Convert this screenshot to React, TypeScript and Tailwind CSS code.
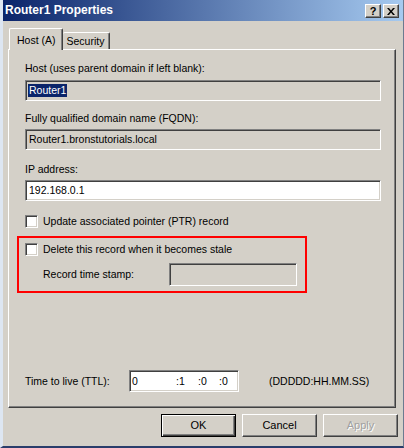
import React from "react";

const font = { fontFamily: '"Liberation Sans", Arial, sans-serif' };

function Sunken({ className = "", bg = "bg-white", children }: { className?: string; bg?: string; children?: React.ReactNode }) {
  return (
    <div
      className={`${bg} border border-t-[#808080] border-l-[#808080] border-b-white border-r-white shadow-[inset_1px_1px_0_#404040,inset_-1px_-1px_0_#d4d0c8] ${className}`}
    >
      {children}
    </div>
  );
}

function Check() {
  return (
    <div className="w-[13px] h-[13px] bg-white border border-t-[#808080] border-l-[#808080] border-b-white border-r-white shadow-[inset_1px_1px_0_#404040,inset_-1px_-1px_0_#d4d0c8] shrink-0" />
  );
}

function Btn({ children, def = false, disabled = false }: { children: React.ReactNode; def?: boolean; disabled?: boolean }) {
  return (
    <div
      className={`w-[75px] h-[23px] flex items-center justify-center text-[11px] ${
        def
          ? "border border-black shadow-[inset_1px_1px_0_#ffffff,inset_-1px_-1px_0_#404040,inset_-2px_-2px_0_#808080]"
          : "border border-t-white border-l-white border-b-[#404040] border-r-[#404040] shadow-[inset_-1px_-1px_0_#808080]"
      }`}
    >
      <span className={disabled ? "text-[#a0a0a0] [text-shadow:1px_1px_0_#ffffff]" : "text-black"}>{children}</span>
    </div>
  );
}

export default function App() {
  return (
    <div
      style={font}
      className="w-[404px] h-[448px] bg-[#d4d0c8] text-[10.5px] leading-[13px] text-black flex flex-col border-l-[3px] border-l-[#dde6f2] border-r border-r-[#6b7a90] border-b-2 border-b-[#2a3d6b] overflow-hidden"
    >
      {/* Title bar */}
      <div className="h-[21px] shrink-0 flex items-center bg-[linear-gradient(to_right,#0a246a,#a6caf0)] pl-[2px] pr-[4px]">
        <span className="text-white font-bold text-[12px] flex-1">Router1 Properties</span>
        <div className="flex gap-[2px] mt-[1px]">
          <div className="w-[16px] h-[14px] bg-[#d4d0c8] border border-t-white border-l-white border-b-[#404040] border-r-[#404040] shadow-[inset_-1px_-1px_0_#808080] flex items-center justify-center font-bold text-[11px] leading-none">?</div>
          <div className="w-[16px] h-[14px] bg-[#d4d0c8] border border-t-white border-l-white border-b-[#404040] border-r-[#404040] shadow-[inset_-1px_-1px_0_#808080] flex items-center justify-center">
            <svg width="8" height="7" viewBox="0 0 8 7">
              <path d="M0 0h2l2 2.5L6 0h2L5 3.5 8 7H6L4 4.5 2 7H0l3-3.5z" fill="#000" />
            </svg>
          </div>
        </div>
      </div>

      {/* Tabs */}
      <div className="flex items-end h-[28px] pl-[6px] shrink-0 relative z-10">
        <div className="h-[22px] -mb-[1px] pl-[7px] pr-[6px] pt-[5px] bg-[#d4d0c8] border-t border-l border-t-white border-l-white border-r border-r-[#404040] shadow-[inset_-1px_0_0_#808080] rounded-t-[2px]">
          Host (A)
        </div>
        <div className="h-[17px] pl-[4px] pr-[5px] pt-[2px] border-t border-t-white border-r border-r-[#404040] shadow-[inset_-1px_0_0_#808080] rounded-t-[2px]">
          Security
        </div>
      </div>

      {/* Panel */}
      <div className="ml-[5px] w-[388px] h-[359px] shrink-0 border border-t-white border-l-white border-b-[#404040] border-r-[#404040] shadow-[inset_-1px_-1px_0_#808080] pl-[16px] pt-[12px] flex flex-col">
        <div>Host (uses parent domain if left blank):</div>
        <Sunken bg="bg-[#d4d0c8]" className="w-[356px] h-[21px] mt-[5px] flex items-center pl-[2px]">
          <span className="bg-[#0a246a] text-white px-[1px]">Router1</span>
        </Sunken>
        <div className="mt-[11px]">Fully qualified domain name (FQDN):</div>
        <Sunken bg="bg-[#d4d0c8]" className="w-[356px] h-[21px] mt-[4px] flex items-center pl-[3px]">
          Router1.bronstutorials.local
        </Sunken>
        <div className="mt-[13px]">IP address:</div>
        <Sunken className="w-[356px] h-[21px] mt-[4px] flex items-center pl-[3px]">192.168.0.1</Sunken>
        <div className="flex items-center gap-[5px] mt-[14px]">
          <Check />
          <span>Update associated pointer (PTR) record</span>
        </div>
        <div className="-ml-[8px] mt-[8px] w-[290px] h-[57px] border-2 border-[#ff0000] pl-[6px] pt-[5px] flex flex-col">
          <div className="flex items-center gap-[5px]">
            <Check />
            <span>Delete this record when it becomes stale</span>
          </div>
          <div className="flex items-center mt-[7px] pl-[18px]">
            <span className="w-[126px]">Record time stamp:</span>
            <Sunken bg="bg-[#d4d0c8]" className="w-[128px] h-[23px]" />
          </div>
        </div>
        <div className="flex items-center mt-[77px]">
          <span className="w-[104px]">Time to live (TTL):</span>
          <Sunken className="w-[110px] h-[22px] flex items-center pl-[2px] relative">
            <span>0</span>
            <span className="absolute left-[46px]">:1</span>
            <span className="absolute left-[68px]">:0</span>
            <span className="absolute left-[89px]">:0</span>
          </Sunken>
          <span className="ml-[30px]">(DDDDD:HH.MM.SS)</span>
        </div>
      </div>

      {/* Buttons */}
      <div className="flex justify-end gap-[6px] pr-[5px] mt-[6px]">
        <Btn def>OK</Btn>
        <Btn>Cancel</Btn>
        <Btn disabled>Apply</Btn>
      </div>
    </div>
  );
}
